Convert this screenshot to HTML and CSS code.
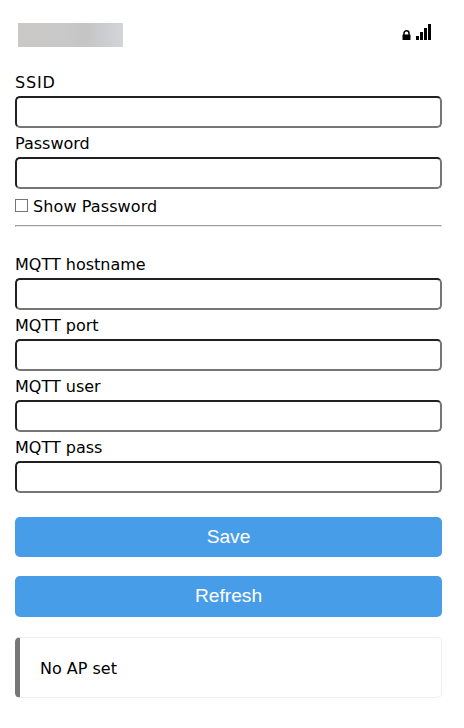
FILE: index.html
```html
<!DOCTYPE html>
<html lang="en">
<head>
<meta charset="utf-8">
<title>WiFi setup</title>
<link rel="stylesheet" href="styles.css">
</head>
<body>
<main class="page">
  <header class="top">
    <div class="network"></div>
    <svg class="signal" width="30" height="18" viewBox="0 0 30 18" aria-hidden="true">
      <path d="M2 11V9.2a2.5 2.5 0 0 1 5 0V11" fill="none" stroke="#000" stroke-width="1.5"/>
      <rect x="0.5" y="10.4" width="8" height="5.6" rx="0.6"/>
      <path d="M14 12h3v4h-3zM18 8h3v8h-3zM22 4h3v12h-3zM26 0h3v16h-3z" shape-rendering="crispEdges"/>
    </svg>
  </header>
  <form>
    <label class="ssid" for="s">SSID</label><input class="field" id="s">
    <label for="p">Password</label><input class="field" id="p" type="password">
    <div class="show"><input class="check" id="c" type="checkbox"><label class="show-label" for="c">Show Password</label></div>
    <hr>
    <label for="mh">MQTT hostname</label><input class="field" id="mh">
    <label for="mp">MQTT port</label><input class="field" id="mp">
    <label for="mu">MQTT user</label><input class="field" id="mu">
    <label for="mq">MQTT pass</label><input class="field" id="mq">
    <button class="save" type="button">Save</button>
    <button class="refresh" type="button">Refresh</button>
  </form>
  <div class="status">No AP set</div>
</main>
</body>
</html>
```
FILE: styles.css
```css
* { box-sizing: border-box; }
body { margin: 0; background: #fff; color: #000; font: 16px Verdana, "DejaVu Sans", sans-serif; }
.page { width: 427px; margin-left: 15px; padding-top: 23px; }
.top { display: flex; justify-content: space-between; height: 44px; padding: 0 10px 0 3px; }
.network { width: 105px; height: 24px; background: linear-gradient(90deg, #c9c8c6, #c9c9c9 40%, #c5c5c5 65%, #cbccce 80%, #d3d5d8); }
.signal { margin-top: 1px; }
label { display: block; height: 29px; line-height: 31px; white-space: nowrap; }
.ssid { letter-spacing: 0.8px; }
.field { display: block; width: 100%; height: 32px; margin: 0; padding: 4px; border: 2px solid; border-color: #212121 #767676 #767676 #212121; border-radius: 5px; background: #fff; }
.show { display: flex; height: 36px; padding-top: 3px; }
.check { appearance: none; width: 13px; height: 13px; margin: 7px 5px 0 0; border: 1px solid #767676; background: #fff; }
.show-label { line-height: 29px; letter-spacing: 0.1px; }
hr { height: 2px; margin: 0 0 22px; border: 1px solid; border-color: #9a9a9a #eee #eee #9a9a9a; }
button { display: block; width: 100%; margin: 0; padding: 0 0 2px; border: 0; border-radius: 5px; background: #489de9; color: #fff; font: 19.2px "Liberation Sans", Arial, sans-serif; }
.save { height: 40px; margin-top: 24px; padding-bottom: 0; }
.refresh { height: 41px; margin-top: 19px; }
.status { height: 61px; margin-top: 20px; padding: 1px 20px 0; border: 1px solid #eee; border-left: 5px solid #777; border-radius: 5px; line-height: 59px; }
```
